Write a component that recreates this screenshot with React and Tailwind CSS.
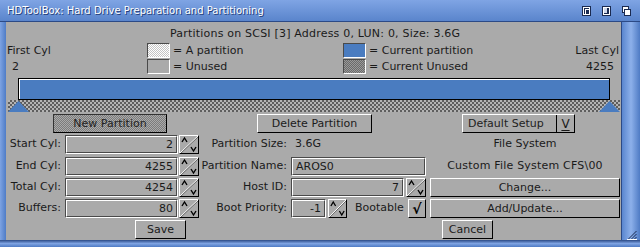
import React from "react";

function Arrows({ w = "w-[20px]" }) {
  return (
    <div className={"h-[19px] shrink-0 border border-t-white border-l-white border-b-black border-r-black bg-[#aaaaaa] " + w}>
      <svg width="100%" height="100%" viewBox="0 0 18 17" preserveAspectRatio="none">
        <line x1="0" y1="17" x2="18" y2="0" stroke="#ffffff" strokeWidth="1" />
        <line x1="1" y1="17" x2="18" y2="1" stroke="#555555" strokeWidth="0.8" />
        <polyline points="2,6 4.5,2 7,6" fill="none" stroke="#000" strokeWidth="1.4" />
        <polyline points="11,11 13.5,15 16,11" fill="none" stroke="#000" strokeWidth="1.4" />
      </svg>
    </div>
  );
}

function Field({ w, value, align = "text-right" }) {
  return (
    <div className={"h-[19px] shrink-0 border border-t-[#4a4a4a] border-l-[#4a4a4a] border-b-white border-r-white " + w}>
      <div className={"h-full border border-t-white border-l-white border-b-[#4a4a4a] border-r-[#4a4a4a] flex items-center px-[3px] leading-none " + align}>
        <span className="w-full">{value}</span>
      </div>
    </div>
  );
}

function Button({ w, children, extra = "" }) {
  return (
    <div className={"h-[19px] shrink-0 border border-t-white border-l-white border-b-black border-r-black bg-[#aaaaaa] flex items-center justify-center leading-none " + w + " " + extra}>
      {children}
    </div>
  );
}

function Swatch({ cls }) {
  return (
    <div className={"w-[23px] h-[15px] shrink-0 border border-t-[#4a4a4a] border-l-[#4a4a4a] border-b-white border-r-white " + cls} />
  );
}

function TitleGadget({ kind }) {
  return (
    <svg width="9" height="10" viewBox="0 0 9 10" className="shrink-0">
      {kind === 0 && (
        <>
          <rect x="0.5" y="0.5" width="8" height="9" fill="#ffffff" stroke="#1a2a50" />
          <rect x="2" y="2" width="5" height="6" fill="#1a2a50" />
          <rect x="3" y="3" width="4" height="5" fill="#ffffff" />
          <rect x="4" y="4" width="3" height="4" fill="#1a2a50" />
        </>
      )}
      {kind === 1 && (
        <>
          <rect x="0.5" y="0.5" width="8" height="9" fill="#ffffff" stroke="#1a2a50" />
          <rect x="2" y="2" width="4" height="5" fill="#cfd8ea" />
          <rect x="5" y="2" width="2" height="6" fill="#1a2a50" />
          <rect x="2" y="7" width="5" height="1" fill="#1a2a50" />
        </>
      )}
      {kind === 2 && (
        <>
          <rect x="0.5" y="0.5" width="6" height="6" fill="#ffffff" stroke="#1a2a50" />
          <rect x="2.5" y="3.5" width="6" height="6" fill="#ffffff" stroke="#1a2a50" />
        </>
      )}
    </svg>
  );
}

export default function App() {
  return (
    <div className="w-[640px] h-[247px] flex flex-col bg-[#5f8ad2] font-['DejaVu_Sans',sans-serif] text-[11px] text-[#1a1a1a] overflow-hidden">
      {/* Title bar */}
      <div className="h-[22px] shrink-0 flex items-center bg-gradient-to-b from-[#7fa4e4] to-[#5a85cc] border-b border-b-[#2c4a86] pl-[7px] pr-[9px]">
        <span className="text-[10px] text-white [text-shadow:1px_1px_0_#25407a]">
          HDToolBox: Hard Drive Preparation and Partitioning
        </span>
        <div className="ml-auto flex items-center gap-[11px] pt-[1px]">
          <TitleGadget kind={0} />
          <TitleGadget kind={1} />
          <TitleGadget kind={2} />
        </div>
      </div>

      {/* Middle */}
      <div className="flex-1 flex min-h-0">
        <div className="w-[6px] shrink-0 bg-gradient-to-r from-[#7ea3e2] to-[#4f7cc6]" />

        {/* Content */}
        <div className="w-[616px] shrink-0 bg-[#aaaaaa] flex flex-col border-r border-r-[#2c4a86]">
          <div className="h-[20px] pt-[2px] flex items-center pl-[164px] leading-none tracking-[0.2px]">
            Partitions on SCSI [3] Address 0, LUN: 0, Size: 3.6G
          </div>

          <div className="h-[16px] flex items-center leading-none">
            <div className="w-[141px] pl-[1px]">First Cyl</div>
            <div className="w-[196px] flex items-center">
              <Swatch cls="bg-[image:conic-gradient(#ffffff_25%,#c4c4c4_0_50%,#ffffff_0_75%,#c4c4c4_0)] bg-[length:2px_2px]" />
              <span className="ml-[3px]">= A partition</span>
            </div>
            <div className="flex-1 flex items-center">
              <Swatch cls="bg-[#4a7cc0]" />
              <span className="ml-[3px]">= Current partition</span>
            </div>
            <div className="pr-[2px] text-right">Last Cyl</div>
          </div>

          <div className="h-[16px] flex items-center leading-none">
            <div className="w-[141px] pl-[6px]">2</div>
            <div className="w-[196px] flex items-center">
              <Swatch cls="bg-[#aaaaaa]" />
              <span className="ml-[3px]">= Unused</span>
            </div>
            <div className="flex-1 flex items-center">
              <Swatch cls="bg-[image:conic-gradient(#6a6a6a_25%,#9a9a9a_0_50%,#6a6a6a_0_75%,#9a9a9a_0)] bg-[length:2px_2px]" />
              <span className="ml-[3px]">= Current Unused</span>
            </div>
            <div className="pr-[7px] text-right">4255</div>
          </div>

          {/* Partition bar */}
          <div className="mt-[4px] ml-[12px] w-[592px] h-[22px] border border-black bg-[#4a7cc0]">
            <div className="h-full border-t border-l border-t-white border-l-white" />
          </div>

          {/* Dither strip */}
          <div className="relative ml-[2px] w-[612px] h-[12px] bg-[image:conic-gradient(#5e5e5e_25%,#b4b4b4_0_50%,#5e5e5e_0_75%,#b4b4b4_0)] bg-[length:4px_4px]">
            <svg width="21" height="12" viewBox="0 0 21 12" className="absolute left-0 top-0">
              <polygon points="0,12 10.5,1 21,12" fill="#4a7cc0" />
            </svg>
            <svg width="21" height="12" viewBox="0 0 21 12" className="absolute right-0 top-0">
              <polygon points="0,12 10.5,1 21,12" fill="#4a7cc0" />
            </svg>
          </div>

          {/* Buttons row */}
          <div className="mt-[2px] h-[19px] flex">
            <div className="ml-[47px] w-[114px] h-[19px] border border-t-[#333] border-l-[#333] border-b-black border-r-black bg-[image:conic-gradient(#aaaaaa_25%,#7c7c7c_0_50%,#aaaaaa_0_75%,#7c7c7c_0)] bg-[length:2px_2px] flex items-center justify-center leading-none text-[#222]">
              New Partition
            </div>
            <Button w="w-[115px]" extra="ml-[90px]">Delete Partition</Button>
            <div className="ml-[90px] w-[113px] h-[19px] border border-t-white border-l-white border-b-black border-r-black flex">
              <div className="flex-1 flex items-center pl-[5px] leading-none text-[#222]">Default Setup</div>
              <div className="w-[18px] border-l border-l-black flex items-center justify-center">
                <span className="underline underline-offset-2 leading-none text-[12px]">V</span>
              </div>
            </div>
          </div>

          {/* Row 1 */}
          <div className="mt-[2px] h-[19px] flex items-center">
            <div className="w-[57px] pr-[2px] text-right">Start Cyl:</div>
            <Field w="ml-[2px] w-[113px]" value="2" />
            <div className="ml-[1px]"><Arrows /></div>
            <div className="w-[231px] flex items-center">
              <div className="w-[88px] text-right">Partition Size:</div>
              <span className="ml-[8px]">3.6G</span>
            </div>
            <div className="w-[190px] text-center">File System</div>
          </div>

          {/* Row 2 */}
          <div className="mt-[3px] h-[19px] flex items-center">
            <div className="w-[57px] pr-[2px] text-right">End Cyl:</div>
            <Field w="ml-[2px] w-[113px]" value="4255" />
            <div className="ml-[1px]"><Arrows /></div>
            <div className="w-[231px] flex items-center">
              <div className="w-[88px] text-right">Partition Name:</div>
              <Field w="ml-[4px] w-[135px]" value="AROS0" align="text-left" />
            </div>
            <div className="w-[190px] text-center tracking-[0.2px]">{"Custom File System CFS\\00"}</div>
          </div>

          {/* Row 3 */}
          <div className="mt-[2px] h-[19px] flex items-center">
            <div className="w-[57px] pr-[2px] text-right">Total Cyl:</div>
            <Field w="ml-[2px] w-[113px]" value="4254" />
            <div className="ml-[1px]"><Arrows /></div>
            <div className="w-[231px] flex items-center">
              <div className="w-[88px] text-right">Host ID:</div>
              <Field w="ml-[4px] w-[113px]" value="7" />
              <div className="ml-[2px]"><Arrows /></div>
            </div>
            <Button w="w-[190px]">Change...</Button>
          </div>

          {/* Row 4 */}
          <div className="mt-[2px] h-[19px] flex items-center">
            <div className="w-[57px] pr-[2px] text-right">Buffers:</div>
            <Field w="ml-[2px] w-[113px]" value="80" />
            <div className="ml-[1px]"><Arrows /></div>
            <div className="w-[231px] flex items-center">
              <div className="w-[88px] text-right">Boot Priority:</div>
              <Field w="ml-[4px] w-[35px]" value="-1" />
              <div className="ml-[2px]"><Arrows w="w-[19px]" /></div>
              <span className="ml-[8px]">Bootable</span>
              <div className="ml-auto mr-[4px] w-[18px] h-[19px] border border-t-white border-l-white border-b-black border-r-black flex items-center justify-center">
                <span className="font-bold text-[14px] leading-none text-black">√</span>
              </div>
            </div>
            <Button w="w-[190px]">Add/Update...</Button>
          </div>

          {/* Row 5 */}
          <div className="mt-[2px] h-[19px] flex items-center">
            <Button w="w-[51px]" extra="ml-[129px]">Save</Button>
            <Button w="w-[51px]" extra="ml-[256px]">Cancel</Button>
          </div>
        </div>

        <div className="flex-1 relative bg-gradient-to-r from-[#5a86cf] via-[#8db0ea] to-[#4f7bc4]">
          <svg width="10" height="10" viewBox="0 0 10 10" className="absolute right-[3px] bottom-[0px]">
            <line x1="1" y1="9.5" x2="9.5" y2="1" stroke="#1a2a50" strokeWidth="1" />
            <line x1="4" y1="9.5" x2="9.5" y2="4" stroke="#1a2a50" strokeWidth="1" />
            <line x1="7" y1="9.5" x2="9.5" y2="7" stroke="#1a2a50" strokeWidth="1" />
            <line x1="0" y1="9.5" x2="10" y2="9.5" stroke="#ffffff" strokeWidth="1" />
          </svg>
        </div>
      </div>

      {/* Bottom border */}
      <div className="h-[7px] shrink-0 bg-gradient-to-b from-[#2c4a86] via-[#7ea3e2] to-[#4f7bc4]" />
    </div>
  );
}
